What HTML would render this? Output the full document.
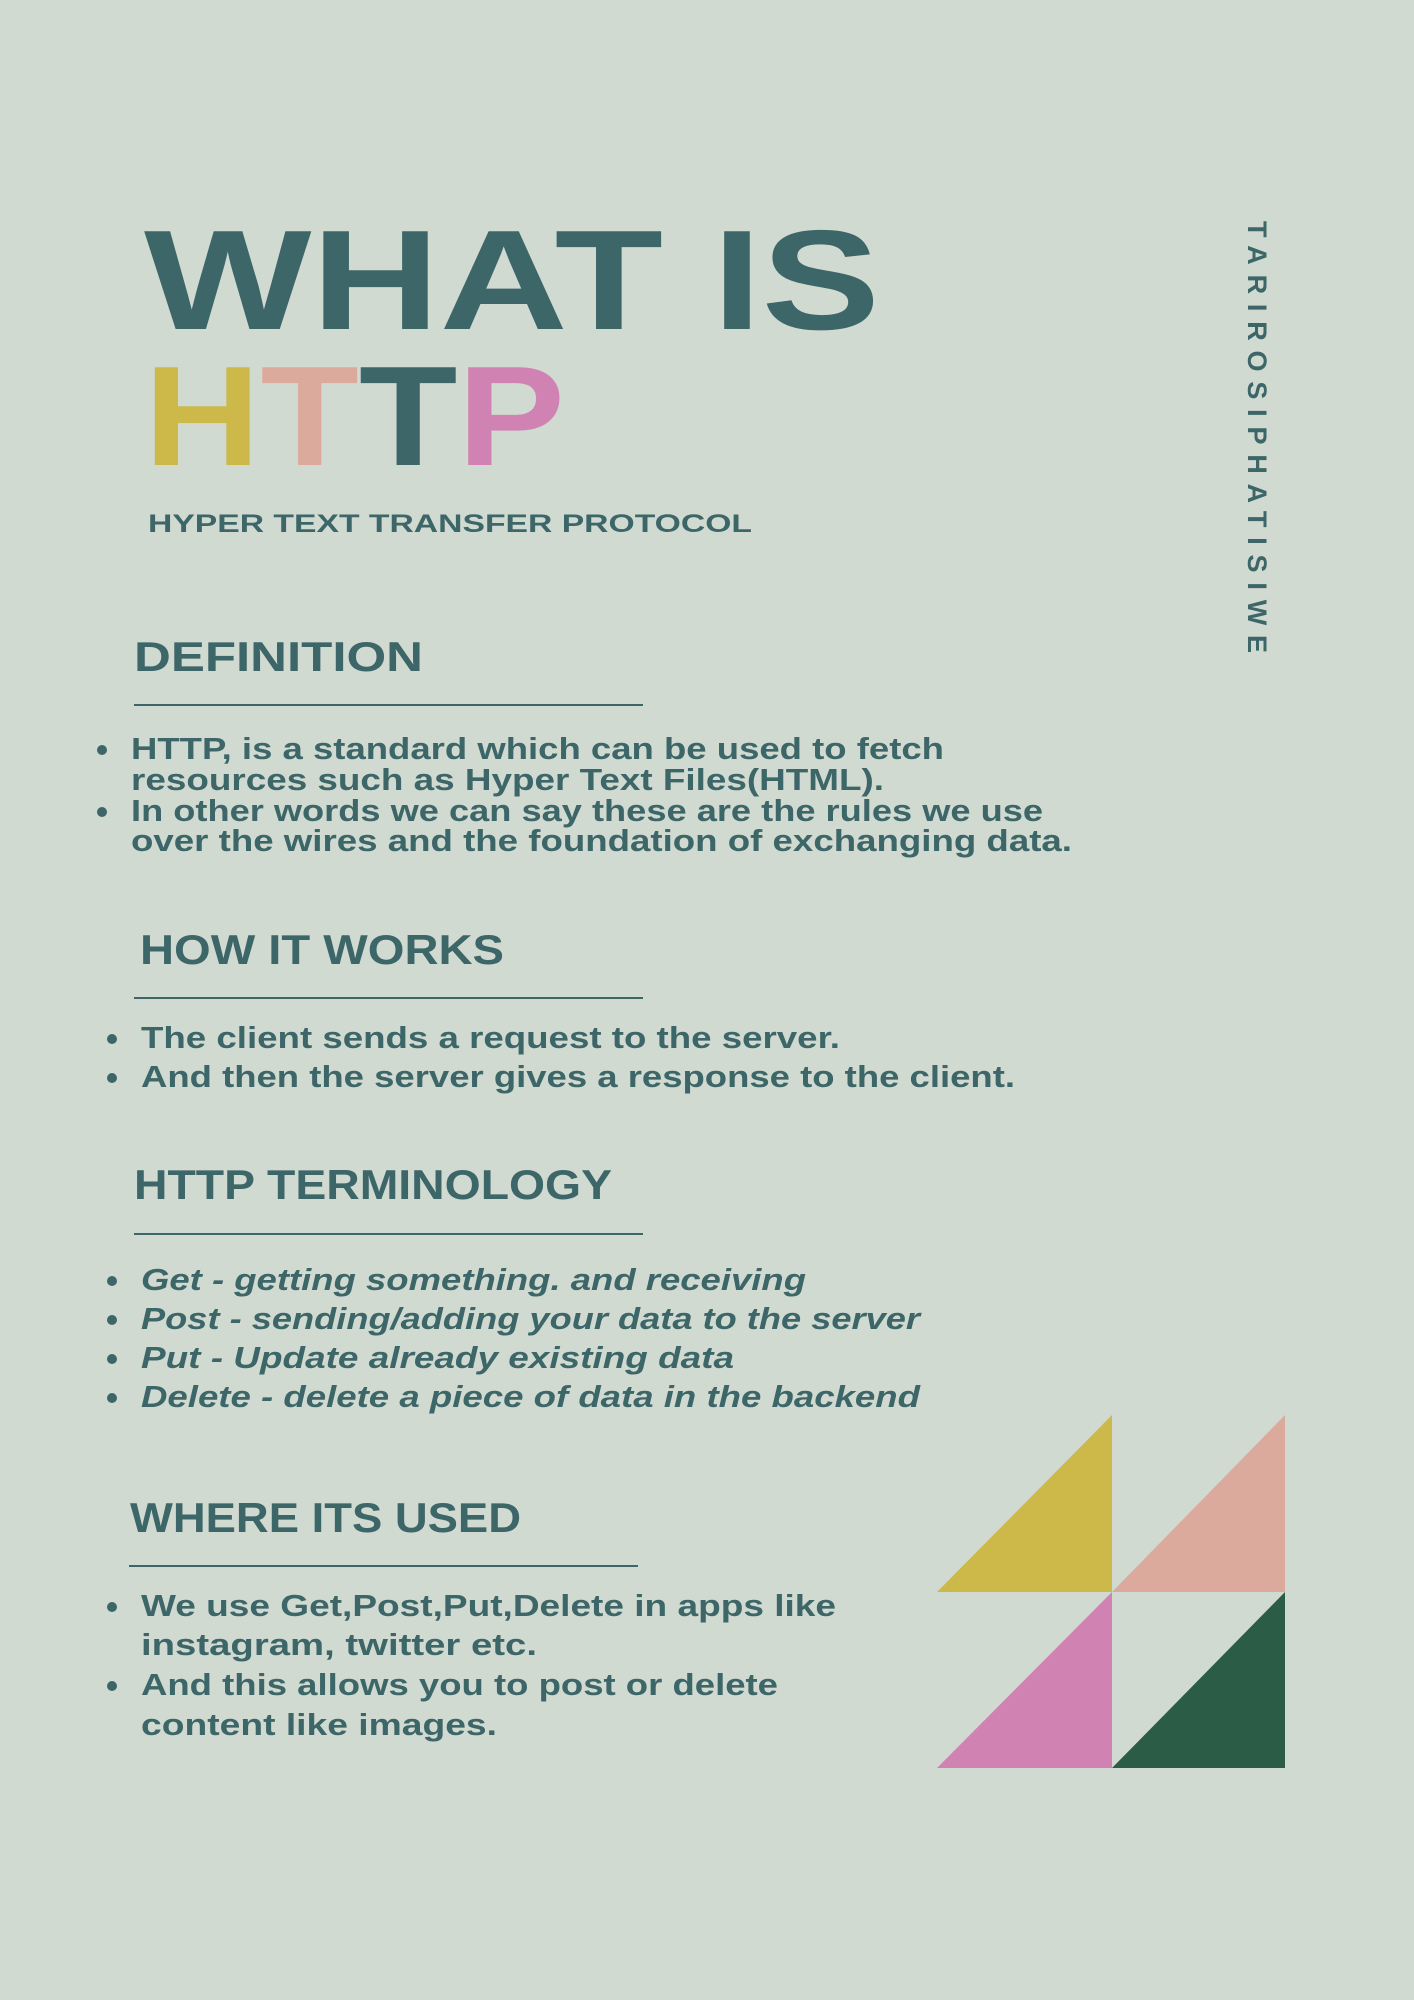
<!DOCTYPE html>
<html><head><meta charset="utf-8"><style>
html,body{margin:0;padding:0;background:#d1dad1;}
svg{display:block}
text{font-family:"Liberation Sans",sans-serif;font-weight:bold;fill:#3d6668}
</style></head><body>
<svg width="1414" height="2000" viewBox="0 0 1414 2000" xmlns="http://www.w3.org/2000/svg">
<rect width="1414" height="2000" fill="#d1dad1"/>
<text x="144" y="329" font-size="142" textLength="736" lengthAdjust="spacingAndGlyphs">WHAT IS</text>
<text x="144" y="465" font-size="142" textLength="421" lengthAdjust="spacingAndGlyphs"><tspan fill="#cdb84a">H</tspan><tspan fill="#dcaa9c">T</tspan><tspan fill="#3d6668">T</tspan><tspan fill="#d083b2">P</tspan></text>
<text x="148" y="532" font-size="25" textLength="604" lengthAdjust="spacingAndGlyphs">HYPER TEXT TRANSFER PROTOCOL</text>
<text transform="translate(1248,221) rotate(90)" font-size="27" textLength="432" lengthAdjust="spacing" font-weight="normal">TARIROSIPHATISIWE</text>

<text x="134" y="671" font-size="42" textLength="289" lengthAdjust="spacingAndGlyphs">DEFINITION</text>
<rect x="134" y="704" width="509" height="2" fill="#3d6668"/>
<circle cx="102" cy="750" r="5" fill="#3d6668"/>
<circle cx="102" cy="812" r="5" fill="#3d6668"/>
<g font-size="31">
<text x="131" y="759" textLength="813" lengthAdjust="spacingAndGlyphs">HTTP, is a standard which can be used to fetch</text>
<text x="131" y="790" textLength="753" lengthAdjust="spacingAndGlyphs">resources such as Hyper Text Files(HTML).</text>
<text x="131" y="821" textLength="912" lengthAdjust="spacingAndGlyphs">In other words we can say these are the rules we use</text>
<text x="131" y="851" textLength="941" lengthAdjust="spacingAndGlyphs">over the wires and the foundation of exchanging data.</text>
</g>

<text x="140" y="964" font-size="42" textLength="364" lengthAdjust="spacingAndGlyphs">HOW IT WORKS</text>
<rect x="134" y="997" width="509" height="2" fill="#3d6668"/>
<circle cx="112" cy="1039" r="5" fill="#3d6668"/>
<circle cx="112" cy="1078" r="5" fill="#3d6668"/>
<g font-size="31">
<text x="141" y="1048" textLength="699" lengthAdjust="spacingAndGlyphs">The client sends a request to the server.</text>
<text x="141" y="1087" textLength="874" lengthAdjust="spacingAndGlyphs">And then the server gives a response to the client.</text>
</g>

<text x="134" y="1199" font-size="42" textLength="478" lengthAdjust="spacingAndGlyphs">HTTP TERMINOLOGY</text>
<rect x="134" y="1233" width="509" height="2" fill="#3d6668"/>
<g fill="#3d6668"><circle cx="112" cy="1281" r="5"/><circle cx="112" cy="1320" r="5"/><circle cx="112" cy="1359" r="5"/><circle cx="112" cy="1398" r="5"/></g>
<g font-size="31" font-style="italic">
<text x="141" y="1290" textLength="665" lengthAdjust="spacingAndGlyphs">Get - getting something. and receiving</text>
<text x="141" y="1329" textLength="779" lengthAdjust="spacingAndGlyphs">Post - sending/adding your data to the server</text>
<text x="141" y="1368" textLength="593" lengthAdjust="spacingAndGlyphs">Put - Update already existing data</text>
<text x="141" y="1407" textLength="779" lengthAdjust="spacingAndGlyphs">Delete - delete a piece of data in the backend</text>
</g>

<text x="130" y="1532" font-size="42" textLength="391" lengthAdjust="spacingAndGlyphs">WHERE ITS USED</text>
<rect x="129" y="1565" width="509" height="2" fill="#3d6668"/>
<circle cx="112" cy="1607" r="5" fill="#3d6668"/>
<circle cx="112" cy="1686" r="5" fill="#3d6668"/>
<g font-size="31">
<text x="141" y="1616" textLength="695" lengthAdjust="spacingAndGlyphs">We use Get,Post,Put,Delete in apps like</text>
<text x="141" y="1655" textLength="396" lengthAdjust="spacingAndGlyphs">instagram, twitter etc.</text>
<text x="141" y="1695" textLength="637" lengthAdjust="spacingAndGlyphs">And this allows you to post or delete</text>
<text x="141" y="1735" textLength="356" lengthAdjust="spacingAndGlyphs">content like images.</text>
</g>

<polygon points="937,1592 1112,1415 1112,1592" fill="#cdb84a"/>
<polygon points="1112,1592 1285,1415 1285,1592" fill="#dcaa9c"/>
<polygon points="937,1768 1112,1592 1112,1768" fill="#d083b2"/>
<polygon points="1112,1768 1285,1592 1285,1768" fill="#2b5c45"/>
</svg>
</body></html>
